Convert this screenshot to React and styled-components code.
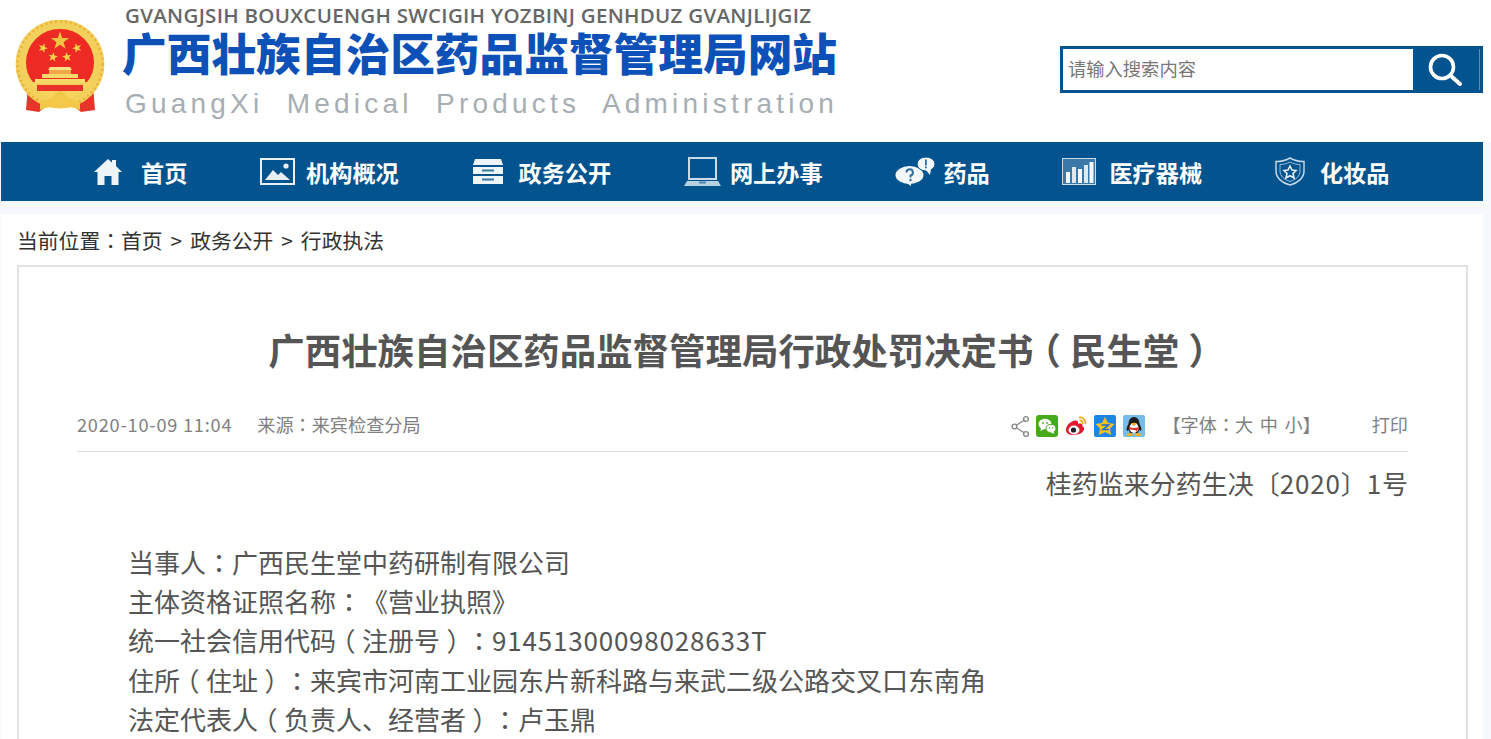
import React from "react";
import styled, { createGlobalStyle } from "styled-components";

const FONT = `"Noto Sans CJK SC", "Noto Sans", sans-serif`;
const BLUE = "#03538f";

const GlobalStyle = createGlobalStyle`
  html, body {
    margin: 0;
    height: 739px;
    overflow: hidden;
    background: #f5f9fd;
    font-family: ${FONT};
    text-spacing-trim: space-all;
  }
`;

// full-width punctuation sits centred in its cell in the reference, which is what the TC cut does
const Mark = styled.span`
  font-family: "Noto Sans CJK TC", sans-serif;
`;

// halt drops the blank half of the glyph, so it can be centred in a full cell
const Paren = styled.span`
  display: inline-block;
  width: 1em;
  text-indent: 0;
  text-align: center;
  font-feature-settings: "halt";
`;

const Num = styled.span`
  letter-spacing: 0.8px;
`;

const punct = text =>
  text.split(/([：（）【】]|[0-9][0-9A-Z:\- ]*)/).map((part, i) => {
    if (i % 2 === 0) return part;
    if (part === "（" || part === "）") return <Paren key={i}>{part}</Paren>;
    if (/[0-9]/.test(part)) return <Num key={i}>{part}</Num>;
    return <Mark key={i}>{part}</Mark>;
  });

const Header = styled.header`
  display: flex;
  justify-content: space-between;
  height: 142px;
  background: #fff;
  padding: 0 8px 0 15px;
`;

const Logo = styled.div`
  display: flex;
  gap: 17px;
`;

const Emblem = styled.svg`
  width: 90px;
  height: 94px;
  margin-top: 20px;
`;

const LogoText = styled.div`
  display: flex;
  flex-direction: column;
  padding-top: 3px;
`;

const LogoTop = styled.div`
  margin-left: 3px;
  font: 600 20.5px/24px "Open Sans", sans-serif;
  letter-spacing: 0.3px;
  color: #666;
  white-space: nowrap;
`;

const LogoTitle = styled.div`
  font-size: 44.7px;
  font-weight: 900;
  line-height: 50px;
  color: #0c50b8;
  white-space: nowrap;
`;

const LogoBottom = styled.div`
  margin: 9px 0 0 3px;
  font: 400 28px/36px "Liberation Sans", sans-serif;
  letter-spacing: 4.2px;
  word-spacing: 11.4px;
  color: #a6aeb4;
  white-space: nowrap;
`;

const Search = styled.form`
  display: flex;
  align-self: flex-start;
  width: 423px;
  height: 47px;
  margin: 46px 0 0;
  box-sizing: border-box;
  border: 3px solid ${BLUE};
  background: ${BLUE};
`;

const SearchInput = styled.input`
  flex: 1;
  min-width: 0;
  border: 0;
  padding: 0 5px 3px;
  font: 18.3px ${FONT};
  background: #fff;
  &::placeholder {
    color: #777;
    opacity: 1;
  }
`;

const SearchButton = styled.button`
  display: flex;
  align-items: center;
  justify-content: center;
  width: 67px;
  padding: 0 3px 0 0;
  border: 0;
  border-right: 1px solid #5c8fb5;
  background: ${BLUE};
`;

const Nav = styled.nav`
  display: flex;
  align-items: center;
  gap: 72.7px;
  height: 59px;
  margin: 0 8px 0 1px;
  padding-left: 92px;
  background: ${BLUE};
`;

const NavItem = styled.a`
  display: flex;
  align-items: center;
  gap: ${props => props.$gap}px;
  font-size: 23.2px;
  font-weight: 700;
  color: #fff;
  white-space: nowrap;
`;

const Main = styled.main`
  margin: 13px 8px 0 1px;
  padding: 0 15px 0 16px;
  background: #fff;
  height: 525px;
  overflow: hidden;
`;

const Crumbs = styled.div`
  display: flex;
  gap: 8px;
  box-sizing: border-box;
  height: 51px;
  align-items: center;
  font-size: 20.8px;
  color: #333;
`;

const Article = styled.article`
  box-sizing: border-box;
  min-height: 480px;
  padding: 0 58px;
  border: 2px solid #e2e2e2;
  border-bottom: 0;
`;

const Title = styled.h1`
  margin: 0;
  padding: 56px 1px 0 0;
  font-size: 36.45px;
  font-weight: 700;
  line-height: 52px;
  text-align: center;
  color: #555;
  white-space: nowrap;
`;

const Meta = styled.div`
  display: flex;
  align-items: center;
  height: 48px;
  padding-bottom: 3px;
  margin-top: 25px;
  border-bottom: 1px solid #ddd;
  font-size: 18.15px;
  color: #808080;
`;

const MetaDate = styled.span`
  margin-right: 25px;
`;

const Share = styled.div`
  display: flex;
  align-items: center;
  gap: 7px;
  margin: 3px 17px 0 auto;
`;

const ShareIcon = styled.svg`
  display: block;
  width: ${props => props.$w || 22}px;
  height: 22px;
`;

const FontSize = styled.span`
  margin-right: 51px;
  word-spacing: 2.5px;
`;

const DocNo = styled.div`
  height: 62px;
  font-size: 26px;
  line-height: 62px;
  text-align: right;
  color: #555;
`;

const Body = styled.div`
  padding-top: 28px;
`;

const Para = styled.p`
  margin: 0;
  text-indent: 51px;
  font-size: 26px;
  line-height: 39.2px;
  color: #555;
  white-space: nowrap;
`;

const Star = ({ x, y, r, rot = 0, fill = "#f8d24a" }) => {
  const pts = [];
  for (let i = 0; i < 10; i++) {
    const rad = i % 2 ? r * 0.4 : r;
    const a = ((i * 36 - 90 + rot) * Math.PI) / 180;
    pts.push(`${(x + rad * Math.cos(a)).toFixed(2)},${(y + rad * Math.sin(a)).toFixed(2)}`);
  }
  return <polygon points={pts.join(" ")} fill={fill} />;
};

const NationalEmblem = () => (
  <Emblem viewBox="0 0 90 94">
    <path d="M13 66 L11 90 L24 92 L34 84 L56 84 L66 92 L80 90 L78 66 Z" fill="#e8352b" />
    <circle cx="45" cy="44" r="44.5" fill="#f3cf5b" />
    <circle cx="45" cy="44" r="42.5" fill="none" stroke="#e5b23a" strokeWidth="2.5" strokeDasharray="2 3" />
    <path d="M45 9 A33.5 33.5 0 0 1 79 42 Q79 54 72 62 L18 62 Q11 54 11 42 A33.5 33.5 0 0 1 45 9 Z" fill="#ee2a24" />
    <path d="M14 62 Q28 80 45 80 Q62 80 76 62 L67 64 Q57 72 45 72 Q33 72 23 64 Z" fill="#f7d55c" />
    <rect x="22" y="65" width="46" height="6" fill="#e9332a" />
    <Star x={45} y={21} r={9.5} fill="#f1c343" />
    <Star x={28} y={28} r={5} rot={20} />
    <Star x={62} y={28} r={5} rot={-20} />
    <Star x={38} y={37} r={5} rot={10} />
    <Star x={52} y={37} r={5} rot={-10} />
    <path d="M35 47 H55 L57 50 H33 Z" fill="#f8e08a" />
    <rect x="34" y="50" width="22" height="4" fill="#f1a64a" />
    <path d="M27 54 H63 V58 H27 Z" fill="#f8d96a" />
    <rect x="20" y="59" width="50" height="4" fill="#f8d96a" />
    <path d="M25 82 Q36 80 40 74 Q45 68 50 74 Q54 80 65 82 L65 90 Q54 85 45 88 Q36 85 25 90 Z" fill="#f4c94a" />
  </Emblem>
);

const HomeIcon = () => (
  <svg width="30" height="28" viewBox="0 0 30 28">
    <path d="M15 1 L19 4.5 V2 H23 V8 L29 14 H25.5 V27 H18.5 V18 H11.5 V27 H4.5 V14 H1 Z" fill="#fff" fillOpacity=".93" />
  </svg>
);

const PictureIcon = () => (
  <svg width="35" height="27" viewBox="0 0 35 27">
    <rect x="1" y="1" width="33" height="25" fill="none" stroke="#e8f0f6" strokeWidth="2" />
    <path d="M5 22 L13 12 L18 17 L21 14 L30 22 Z" fill="#e8f0f6" />
    <circle cx="26" cy="8" r="2.6" fill="#e8f0f6" />
  </svg>
);

const ArchiveIcon = () => (
  <svg width="32" height="27" viewBox="0 0 32 27">
    <path d="M3 1 H29 L31 7 H1 Z" fill="#eef4f8" />
    <path d="M1 9 H31 V16 H1 Z M1 18 H31 V26 H1 Z" fill="#eef4f8" />
    <path d="M10 12.5 H22 M10 21.5 H22" stroke="#3a78a6" strokeWidth="2" />
  </svg>
);

const LaptopIcon = () => (
  <svg width="37" height="29" viewBox="0 0 37 29">
    <rect x="5" y="1" width="27" height="21" fill="none" stroke="#c9dbe8" strokeWidth="2" />
    <path d="M3 24 H34 L37 29 H0 Z" fill="#b9d0e1" />
    <rect x="15" y="24.5" width="7" height="2" fill="#4f86ad" />
  </svg>
);

const BubbleIcon = () => (
  <svg width="43" height="29" viewBox="0 0 43 29">
    <ellipse cx="14.5" cy="18" rx="14" ry="9" fill="#f2f7fa" />
    <path d="M10 25 L16 29 L16 25 Z" fill="#f2f7fa" />
    <path d="M11.5 15.5 A3.2 3.2 0 1 1 15.5 18.5 V20.5" fill="none" stroke="#2f6f9f" strokeWidth="2" />
    <circle cx="15.5" cy="23" r="1.2" fill="#2f6f9f" />
    <ellipse cx="31" cy="7" rx="9" ry="7" fill="#f2f7fa" stroke={BLUE} strokeWidth="1" />
    <path d="M30 12 L35 18 L36 12 Z" fill="#f2f7fa" />
    <rect x="30" y="2.5" width="1.8" height="6" fill="#2f6f9f" />
    <rect x="30" y="9.5" width="1.8" height="1.8" fill="#2f6f9f" />
  </svg>
);

const ChartIcon = () => (
  <svg width="34" height="27" viewBox="0 0 34 27">
    <rect x=".5" y=".5" width="33" height="26" fill="#3b78a8" stroke="#c9dcea" />
    <rect x="4" y="14" width="4" height="11" fill="#f2f7fa" />
    <rect x="10" y="9" width="4" height="16" fill="#dde9f2" />
    <rect x="16" y="11" width="4" height="14" fill="#f2f7fa" />
    <rect x="22" y="7" width="4" height="18" fill="#dde9f2" />
    <rect x="27.5" y="4" width="4" height="21" fill="#f2f7fa" />
  </svg>
);

const ShieldIcon = () => (
  <svg width="30" height="29" viewBox="0 0 30 29">
    <path d="M15 1 C19 3.5 24 4.5 29 4.5 V14 C29 21 23 26 15 28 C7 26 1 21 1 14 V4.5 C6 4.5 11 3.5 15 1 Z" fill="none" stroke="#c4d7e6" strokeWidth="1.5" />
    <path d="M15 5 C18 6.5 21 7.5 25 7.5 V14 C25 19 21 22.5 15 24.5 C9 22.5 5 19 5 14 V7.5 C9 7.5 12 6.5 15 5 Z" fill="none" stroke="#9fbdd4" strokeWidth="1" />
    <path d="M15 9 L17 13 L21 13.5 L18 16.5 L19 21 L15 18.7 L11 21 L12 16.5 L9 13.5 L13 13 Z" fill="none" stroke="#e6eff6" strokeWidth="1.6" />
  </svg>
);

const SearchIcon = () => (
  <svg width="36" height="36" viewBox="0 0 36 36">
    <circle cx="15" cy="15" r="11.5" fill="none" stroke="#fff" strokeWidth="3.6" />
    <path d="M24 24 L33 32" stroke="#fff" strokeWidth="4" strokeLinecap="round" />
  </svg>
);

const ShareNodes = () => (
  <ShareIcon viewBox="0 0 18 22" $w={18}>
    <path d="M15 4 L3.5 11.5 L15 19" fill="none" stroke="#888" strokeWidth="1.4" />
    <circle cx="15" cy="4" r="2.4" fill="#fff" stroke="#888" strokeWidth="1.4" />
    <circle cx="3.5" cy="11.5" r="2.4" fill="#fff" stroke="#888" strokeWidth="1.4" />
    <circle cx="15" cy="19" r="2.4" fill="#fff" stroke="#888" strokeWidth="1.4" />
  </ShareIcon>
);

const Wechat = () => (
  <ShareIcon viewBox="0 0 22 22">
    <rect width="22" height="22" rx="3" fill="#46ab1c" />
    <ellipse cx="9" cy="9" rx="6.5" ry="5.2" fill="#fff" />
    <path d="M5 12 L4.5 16 L9 13.5 Z" fill="#fff" />
    <ellipse cx="15" cy="13.5" rx="5" ry="4.2" fill="#fff" stroke="#46ab1c" />
    <path d="M17 16 L18.5 19 L14 17 Z" fill="#fff" />
    <circle cx="7" cy="8" r=".9" fill="#46ab1c" />
    <circle cx="11" cy="8" r=".9" fill="#46ab1c" />
    <circle cx="13.5" cy="13" r=".7" fill="#46ab1c" />
    <circle cx="16.5" cy="13" r=".7" fill="#46ab1c" />
  </ShareIcon>
);

const Weibo = () => (
  <ShareIcon viewBox="0 0 22 22">
    <path d="M1 15 C1 10 6 6 10.5 5.5 C13 5.3 13.5 7.5 13 9 C16 8 18 9 17.5 11.5 C20 12.5 19.5 15.5 17 17.5 C13 21 1 21.5 1 15 Z" fill="#e6162d" />
    <ellipse cx="9" cy="15" rx="5.5" ry="4.4" fill="#fff" />
    <circle cx="8.5" cy="15" r="2.6" fill="#222" />
    <path d="M14 2.5 C18 2 21 5 20.5 9 M14.5 5.5 C16.5 5.2 18 6.8 17.8 9" fill="none" stroke="#f5a623" strokeWidth="1.7" />
  </ShareIcon>
);

const Qzone = () => (
  <ShareIcon viewBox="0 0 22 22">
    <rect width="22" height="22" rx="2" fill="#1c86e8" />
    <path d="M11 2 L14 8 L20.5 9 L16 13.5 L17 20 L11 17 L5 20 L6 13.5 L1.5 9 L8 8 Z" fill="#fcc419" />
    <path d="M7.5 10 H14.5 L9 14.5 H15" fill="none" stroke="#1c6fc4" strokeWidth="1.6" />
  </ShareIcon>
);

const Qq = () => (
  <ShareIcon viewBox="0 0 22 22">
    <rect width="22" height="22" rx="2" fill="#75bde8" />
    <path d="M11 2 C15 2 16.5 6 16.5 9 C18 11.5 19 14 18 16 L16 15 C15.5 17 15 18 15 18 L7 18 C7 18 6.5 17 6 15 L4 16 C3 14 4 11.5 5.5 9 C5.5 6 7 2 11 2 Z" fill="#1d1d1d" />
    <ellipse cx="11" cy="13" rx="4.5" ry="5" fill="#fff" />
    <path d="M6 12 Q11 14 16 12 L16 14 L14 15 L14 17 L12 15 Q8 15 6 14 Z" fill="#e4322b" />
    <path d="M8 8.5 Q11 7 14 8.5 L11 11 Z" fill="#f7b21b" />
    <ellipse cx="7" cy="19.5" rx="3" ry="1.5" fill="#f7b21b" />
    <ellipse cx="15" cy="19.5" rx="3" ry="1.5" fill="#f7b21b" />
  </ShareIcon>
);

const navItems = [
  { label: "首页", gap: 18, icon: <HomeIcon /> },
  { label: "机构概况", gap: 11, icon: <PictureIcon /> },
  { label: "政务公开", gap: 15, icon: <ArchiveIcon /> },
  { label: "网上办事", gap: 9, icon: <LaptopIcon /> },
  { label: "药品", gap: 5, icon: <BubbleIcon /> },
  { label: "医疗器械", gap: 13, icon: <ChartIcon /> },
  { label: "化妆品", gap: 15, icon: <ShieldIcon /> },
];

const lines = [
  "当事人：广西民生堂中药研制有限公司",
  "主体资格证照名称：《营业执照》",
  "统一社会信用代码（注册号）：91451300098028633T",
  "住所（住址）：来宾市河南工业园东片新科路与来武二级公路交叉口东南角",
  "法定代表人（负责人、经营者）：卢玉鼎",
];

export default function App() {
  return (
    <>
      <GlobalStyle />
      <Header>
        <Logo>
          <NationalEmblem />
          <LogoText>
            <LogoTop>GVANGJSIH BOUXCUENGH SWCIGIH YOZBINJ GENHDUZ GVANJLIJGIZ</LogoTop>
            <LogoTitle>广西壮族自治区药品监督管理局网站</LogoTitle>
            <LogoBottom>GuangXi Medical Products Administration</LogoBottom>
          </LogoText>
        </Logo>
        <Search>
          <SearchInput placeholder="请输入搜索内容" />
          <SearchButton type="button" aria-label="搜索">
            <SearchIcon />
          </SearchButton>
        </Search>
      </Header>
      <Nav>
        {navItems.map(item => (
          <NavItem key={item.label} $gap={item.gap}>
            {item.icon}
            {item.label}
          </NavItem>
        ))}
      </Nav>
      <Main>
        <Crumbs>
          <span>{punct("当前位置：首页")}</span>
          <span>&gt;</span>
          <span>政务公开</span>
          <span>&gt;</span>
          <span>行政执法</span>
        </Crumbs>
        <Article>
          <Title>{punct("广西壮族自治区药品监督管理局行政处罚决定书（民生堂）")}</Title>
          <Meta>
            <MetaDate>{punct("2020-10-09 11:04")}</MetaDate>
            <span>{punct("来源：来宾检查分局")}</span>
            <Share>
              <ShareNodes />
              <Wechat />
              <Weibo />
              <Qzone />
              <Qq />
            </Share>
            <FontSize>{punct("【字体：大 中 小】")}</FontSize>
            <span>打印</span>
          </Meta>
          <DocNo>{punct("桂药监来分药生决〔2020〕1号")}</DocNo>
          <Body>
            {lines.map(line => (
              <Para key={line}>{punct(line)}</Para>
            ))}
          </Body>
        </Article>
      </Main>
    </>
  );
}
